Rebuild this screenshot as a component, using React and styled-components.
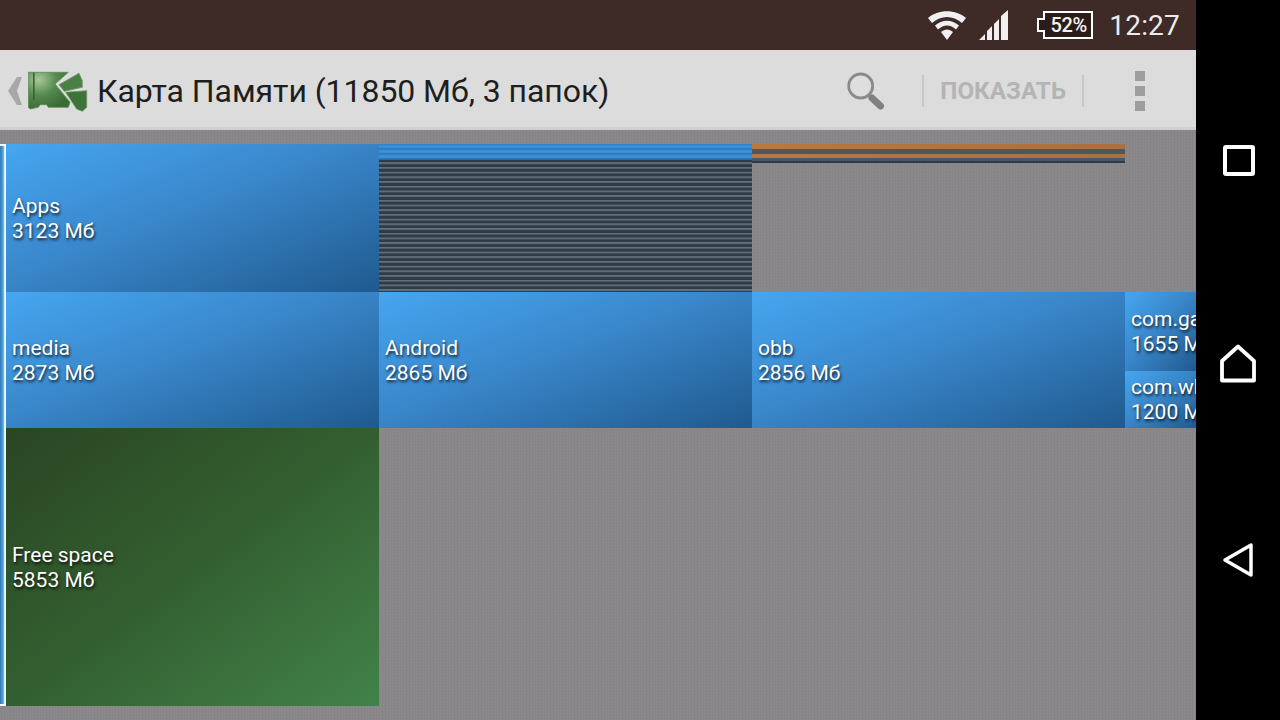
import React from 'react'
import styled, { createGlobalStyle } from 'styled-components'

const GlobalStyle = createGlobalStyle`
  html, body { margin: 0; padding: 0; background: #000; }
  body { font-family: Roboto, "Noto Sans", sans-serif; overflow: hidden; }
`

const Screen = styled.div`
  display: flex;
  width: 1280px;
  height: 720px;
  overflow: hidden;
`

const Main = styled.div`
  display: flex;
  flex-direction: column;
  width: 1196px;
  height: 720px;
`

const StatusBar = styled.div`
  display: flex;
  align-items: center;
  justify-content: flex-end;
  height: 50px;
  flex: none;
  padding-right: 16px;
  box-sizing: border-box;
  background: #3e2a26;
`

const Clock = styled.span`
  margin-left: 16px;
  font-size: 28px;
  color: #ececec;
  letter-spacing: 0.2px;
`

const Battery = styled.div`
  position: relative;
  margin-left: 28px;
  width: 56px;
  height: 28px;
  padding-left: 7px;
  box-sizing: border-box;
  color: #f2f2f2;
  font-size: 20px;
  font-weight: 500;
  letter-spacing: -0.3px;
  line-height: 28px;
  text-align: center;
`

const BatteryShell = styled.svg`
  position: absolute;
  left: 0;
  top: 0;
  z-index: 0;
`

const BatteryText = styled.span`
  position: relative;
  z-index: 1;
`

const Toolbar = styled.div`
  display: flex;
  align-items: center;
  height: 80px;
  flex: none;
  box-sizing: border-box;
  padding: 4px 0 0 8px;
  background: #dcdcdc;
  border-bottom: 3px solid #d0d0d0;
`

const Logo = styled.svg`
  margin-left: 6px;
  flex: none;
`

const Title = styled.h1`
  margin: 0 0 0 9px;
  flex: 1;
  font-size: 32px;
  font-weight: 400;
  letter-spacing: -0.06px;
  color: #1e1e1e;
  white-space: nowrap;
`

const Show = styled.div`
  display: flex;
  align-items: center;
  height: 32px;
  margin-left: 37px;
  padding: 0 16px;
  border-left: 2px solid #c8c8c8;
  border-right: 2px solid #c8c8c8;
  font-size: 24.2px;
  font-weight: 700;
  color: #b4b4b4;
  white-space: nowrap;
`

const Dots = styled.div`
  display: flex;
  flex-direction: column;
  gap: 5px;
  margin: 0 51px;
`

const Dot = styled.span`
  width: 10px;
  height: 10px;
  background: #9e9e9e;
`

const TreeMap = styled.div`
  display: flex;
  flex: 1;
  padding-top: 14px;
  overflow: hidden;
  background-color: #8c8a8c;
  background-image: conic-gradient(#868486 25%, transparent 0 50%, #868486 0 75%, transparent 0);
  background-size: 3px 3px;
`

const RootStrip = styled.div`
  width: 6px;
  height: 562px;
  flex: none;
  box-sizing: border-box;
  border: solid #f4fafe;
  border-width: 2px 0;
  background: linear-gradient(90deg, #2f78b6 0%, #5aa9e2 55%, #d8eefb 75%, #fff 85%, #fff 100%);
`

const Rows = styled.div`
  display: flex;
  flex-direction: column;
`

const Row = styled.div`
  display: flex;
  height: ${p => p.$height}px;
`

const Cell = styled.div`
  display: flex;
  flex-direction: column;
  justify-content: center;
  flex: none;
  width: ${p => p.$width || 373}px;
  height: ${p => p.$height ? `${p.$height}px` : 'auto'};
  box-sizing: border-box;
  padding: 1px 0 0 6px;
  overflow: hidden;
  white-space: nowrap;
  font-size: 21px;
  line-height: 25px;
  color: #fff;
  text-shadow: 1px 2px 3px rgba(0, 0, 0, 0.8);
  background: ${p => p.$free
    ? 'linear-gradient(to bottom right, #2a4523 0%, #335f30 50%, #42824a 100%)'
    : 'linear-gradient(to bottom right, #45a6f0 0%, #3a87cb 45%, #1f5a8f 100%)'};
`

const SideStack = styled.div`
  display: flex;
  flex-direction: column;
  width: 71px;
`

const StripeColumn = styled.div`
  display: flex;
  flex-direction: column;
  width: 373px;
  flex: none;
`

const Stripe = styled.div`
  height: ${p => p.$height}px;
  flex: none;
  background: ${p => p.$color};
`

const DarkLines = styled.div`
  flex: 1;
  background: repeating-linear-gradient(180deg, #2f3c47 0, #2f3c47 2px, #63727c 2.6px, #5a6a75 3.6px, #2f3c47 4.7px);
`

const NavBar = styled.nav`
  display: flex;
  flex-direction: column;
  align-items: center;
  width: 84px;
  flex: none;
  background: #000;
`

const NavIcon = styled.svg`
  display: block;
  margin-top: ${p => p.$top}px;
`

const blue = 'linear-gradient(180deg, #2f7fc4, #3d98e2 60%, #2a6fae)'
const orange = 'linear-gradient(90deg, #b9783e, #a9713f)'

export default function App() {
  return (
    <Screen>
      <GlobalStyle />
      <Main>
        <StatusBar>
          <svg width="40" height="32" viewBox="0 0 40 32">
            <path d="M1 9C11 0 29 0 39 9L35 14C26 6 14 6 5 14Z" fill="#f0f0f0" />
            <path d="M8 16.5C15 10 25 10 32 16.5L29 20.500C23 15 17 15 11 20.500Z" fill="#f0f0f0" />
            <path d="M14 23C18 19.500 22 19.500 26 23L20 31Z" fill="#f0f0f0" />
          </svg>
          <svg width="30" height="30" viewBox="0 0 30 30" style={{ marginLeft: 12 }}>
            <path d="M0 30L6 24V30ZM8 30V21L13 16V30ZM15 30V14L20 9V30ZM22 30V6L29 0V30Z" fill="#f0f0f0" />
          </svg>
          <Battery>
            <BatteryShell width="56" height="28" viewBox="0 0 56 28">
              <path d="M7 1H55V27H7V20H1V8H7Z" fill="#2c1c19" stroke="#fff" strokeWidth="2" />
            </BatteryShell>
            <BatteryText>52%</BatteryText>
          </Battery>
          <Clock>12:27</Clock>
        </StatusBar>
        <Toolbar>
          <svg width="14" height="28" viewBox="0 0 14 28">
            <path d="M9 0H14L9 14L14 28H9L0 14Z" fill="#a8a8a8" />
          </svg>
          <Logo width="60" height="44" viewBox="0 0 60 44">
            <defs>
              <radialGradient id="card" cx="0.25" cy="0.2" r="0.85">
                <stop offset="0" stopColor="#a8c89a" />
                <stop offset="0.5" stopColor="#568a4f" />
                <stop offset="1" stopColor="#3a6a35" />
              </radialGradient>
            </defs>
            <path d="M0.3 3.3H40.3L27 15L42 33.300L40.3 38.300H20.300L18.700 35.700H12L10.300 38.300L2 40L0.3 38.300Z" fill="url(#card)" stroke="#5d8a56" strokeWidth="0.800" strokeLinejoin="round" />
            <path d="M51 4.300L31 15.700L36.300 22.300L54.300 18.300V11.700Z" fill="#4b8045" stroke="#6b9664" strokeWidth="0.800" strokeLinejoin="round" />
            <path d="M37.700 23.300L58.700 21.700V38.300L54.300 42.300L48.700 40Z" fill="#3d7239" stroke="#6b9664" strokeWidth="0.800" strokeLinejoin="round" />
            <rect x="5" y="3.500" width="1.500" height="28" fill="#35602f" />
          </Logo>
          <Title>Карта Памяти (11850 Мб, 3 папок)</Title>
          <svg width="40" height="40" viewBox="0 0 40 40">
            <circle cx="15.700" cy="15" r="12" fill="#dedede" stroke="#8a8a8a" strokeWidth="2.800" />
            <path d="M24 24L27 27" stroke="#8a8a8a" strokeWidth="3" />
            <path d="M27 27L35.500 35" stroke="#808080" strokeWidth="7" strokeLinecap="round" />
          </svg>
          <Show>ПОКАЗАТЬ</Show>
          <Dots>
            <Dot />
            <Dot />
            <Dot />
          </Dots>
        </Toolbar>
        <TreeMap>
          <RootStrip />
          <Rows>
            <Row $height={148}>
              <Cell>Apps<br />3123 Мб</Cell>
              <StripeColumn>
                <Stripe $height={5} $color={blue} />
                <Stripe $height={5} $color={blue} />
                <Stripe $height={5} $color={blue} />
                <Stripe $height={1} $color="#2a659c" />
                <DarkLines />
              </StripeColumn>
              <StripeColumn>
                <Stripe $height={5} $color={orange} />
                <Stripe $height={5} $color="#46586a" />
                <Stripe $height={4} $color={orange} />
                <Stripe $height={3} $color="#46586a" />
                <Stripe $height={2} $color="#2f3c47" />
              </StripeColumn>
            </Row>
            <Row $height={136}>
              <Cell>media<br />2873 Мб</Cell>
              <Cell>Android<br />2865 Мб</Cell>
              <Cell>obb<br />2856 Мб</Cell>
              <SideStack>
                <Cell $width={71} $height={79}>com.game<br />1655 Мб</Cell>
                <Cell $width={71} $height={57}>com.whatsapp<br />1200 Мб</Cell>
              </SideStack>
            </Row>
            <Row $height={278}>
              <Cell $free>Free space<br />5853 Мб</Cell>
            </Row>
          </Rows>
        </TreeMap>
      </Main>
      <NavBar>
        <NavIcon $top={144} width="34" height="34" viewBox="0 0 34 34">
          <rect x="4" y="3" width="28" height="27" fill="none" stroke="#fff" strokeWidth="4" rx="1" />
        </NavIcon>
        <NavIcon $top={166} width="38" height="40" viewBox="0 0 38 40">
          <path d="M3 36.500V17L19 2.500L35 17V36.500Z" fill="none" stroke="#fff" strokeWidth="3.800" strokeLinejoin="round" />
        </NavIcon>
        <NavIcon $top={158} width="34" height="36" viewBox="0 0 34 36">
          <path d="M30 3V33L4 18Z" fill="none" stroke="#fff" strokeWidth="3.500" strokeLinejoin="round" />
        </NavIcon>
      </NavBar>
    </Screen>
  )
}
